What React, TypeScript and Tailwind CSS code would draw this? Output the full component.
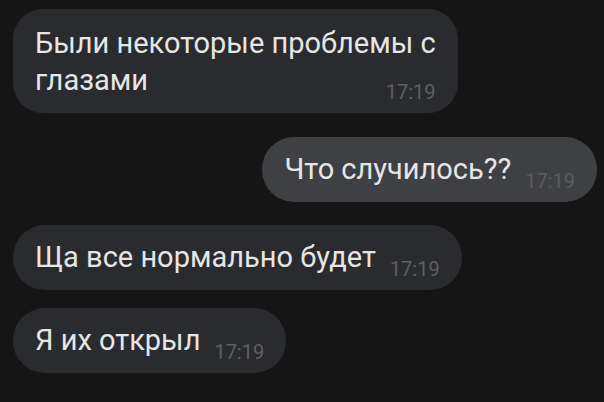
import React from "react";

type Msg = {
  lines: string[];
  time: string;
  out?: boolean;
  gap: string;
};

const messages: Msg[] = [
  { lines: ["Были некоторые проблемы с", "глазами"], time: "17:19", gap: "mt-[9px]" },
  { lines: ["Что случилось??"], time: "17:19", out: true, gap: "mt-[24px]" },
  { lines: ["Ща все нормально будет"], time: "17:19", gap: "mt-[23px]" },
  { lines: ["Я их открыл"], time: "17:19", gap: "mt-[18px]" },
];

function Bubble({ msg }: { msg: Msg }) {
  const multi = msg.lines.length > 1;
  const bg = msg.out ? "bg-[#3f4044]" : "bg-[#2a2b2e]";
  const timeColor = msg.out ? "text-[#5a5b5f]" : "text-[#5e5f63]";

  if (multi) {
    return (
      <div className={`${bg} rounded-[30px] pl-[22px] pr-[22px] pt-[16px] pb-[14px] flex flex-col`}>
        <div className="text-[29px] leading-[37px] text-[#e6e6e6] whitespace-nowrap">
          {msg.lines.map((l, i) => (
            <div key={i}>{l}</div>
          ))}
        </div>
        <span className={`self-end text-[20px] leading-none ${timeColor} -mt-[17px] mb-[-3px]`}>{msg.time}</span>
      </div>
    );
  }

  return (
    <div className={`${bg} rounded-[32px] pl-[22px] pr-[22px] py-[14px] flex items-end`}>
      <span className="text-[29px] leading-[37px] text-[#e6e6e6] whitespace-nowrap">{msg.lines[0]}</span>
      <span className={`ml-[14px] text-[20px] leading-none ${timeColor} mb-[-3px]`}>{msg.time}</span>
    </div>
  );
}

export default function App() {
  return (
    <div
      className="w-[604px] h-[402px] bg-[#151516] overflow-hidden px-[13px] flex flex-col"
      style={{ fontFamily: "Roboto, 'Noto Sans', sans-serif" }}
    >
      {messages.map((m, i) => (
        <div key={i} className={`${m.gap} flex ${m.out ? "justify-end mr-[-6px]" : "justify-start"}`}>
          <Bubble msg={m} />
        </div>
      ))}
    </div>
  );
}
